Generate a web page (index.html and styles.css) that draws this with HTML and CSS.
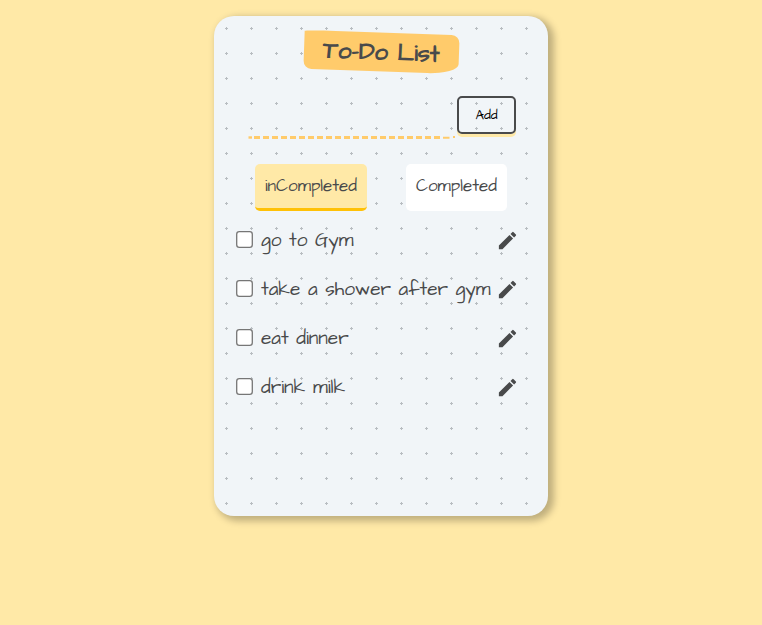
FILE: index.html
```html
<!DOCTYPE html>
<html lang="en">
<head>
<meta charset="utf-8">
<title>To-Do List</title>
<link rel="stylesheet" href="styles.css">
</head>
<body>
<main class="card">
  <h1 class="title"><span>To-Do List</span></h1>
  <form class="entry">
    <div class="field"><svg width="209" height="3" viewBox="0 0 209 3"><path d="M0.500 1.500H4" stroke="#ffcb6b" stroke-width="2.4"/><path d="M6 1.500H195" stroke="#ffcb6b" stroke-width="3" stroke-dasharray="6 3"/><path d="M195 1.800H201.500M205 1H207" stroke="#ffcb6b" stroke-width="2"/></svg></div>
    <button class="add" type="button">Add</button>
  </form>
  <nav class="tabs">
    <div class="tab active"><span>inCompleted</span></div>
    <div class="tab done"><span>Completed</span></div>
  </nav>
  <ul class="list">
    <li><input class="box" type="checkbox"><span class="text">go to Gym</span><svg class="pen" viewBox="0 0 24 24"><path d="M3 17.25V21h3.75L17.81 9.94l-3.75-3.75L3 17.25zM20.71 7.04c.39-.39.39-1.02 0-1.41l-2.34-2.34a.9959.9959 0 0 0-1.41 0l-1.83 1.83 3.75 3.75 1.83-1.83z"/></svg></li>
    <li><input class="box" type="checkbox"><span class="text">take a shower after gym</span><svg class="pen" viewBox="0 0 24 24"><path d="M3 17.25V21h3.75L17.81 9.94l-3.75-3.75L3 17.25zM20.71 7.04c.39-.39.39-1.02 0-1.41l-2.34-2.34a.9959.9959 0 0 0-1.41 0l-1.83 1.83 3.75 3.75 1.83-1.83z"/></svg></li>
    <li><input class="box" type="checkbox"><span class="text">eat dinner</span><svg class="pen" viewBox="0 0 24 24"><path d="M3 17.25V21h3.75L17.81 9.94l-3.75-3.75L3 17.25zM20.71 7.04c.39-.39.39-1.02 0-1.41l-2.34-2.34a.9959.9959 0 0 0-1.41 0l-1.83 1.83 3.75 3.75 1.83-1.83z"/></svg></li>
    <li><input class="box" type="checkbox"><span class="text">drink milk</span><svg class="pen" viewBox="0 0 24 24"><path d="M3 17.25V21h3.75L17.81 9.94l-3.75-3.75L3 17.25zM20.71 7.04c.39-.39.39-1.02 0-1.41l-2.34-2.34a.9959.9959 0 0 0-1.41 0l-1.83 1.83 3.75 3.75 1.83-1.83z"/></svg></li>
  </ul>
</main>
</body>
</html>
```
FILE: styles.css
```css
* { box-sizing: border-box; }
body {
  margin: 0;
  padding-top: 16px;
  min-height: 625px;
  background: #ffe9a7;
  color: #494a4b;
  font-family: "Architects Daughter", Lato, sans-serif;
  font-weight: 300;
}
.card {
  width: 334px;
  height: 500px;
  margin: 0 auto;
  padding-top: 16px;
  border-radius: 20px;
  background: radial-gradient(#b8bdc1 1.3px, transparent 1.3px) 0 0 / 25px 25px #f1f5f8;
  box-shadow: 4px 3px 7px 2px #00000040;
}
.title {
  width: 155px;
  height: 39px;
  margin: 0 0 0 90px;
  padding-left: 19px;
  background: #ffcb6b;
  border-radius: 31px 8px 31px 8px / 1px 8px 10px 8px;
  transform: translateY(0.5px) rotate(2deg);
  font-size: 24px;
  font-weight: 700;
  line-height: 40px;
  white-space: nowrap;
}
.entry {
  display: flex;
  align-items: flex-start;
  margin: 25px 0 0 34px;
}
.field { width: 209px; height: 43px; padding-top: 40px; }
.field svg { display: block; }
.add {
  width: 59px;
  height: 38px;
  padding: 0;
  border: 2px solid #494a4b;
  border-radius: 5px;
  background: transparent;
  box-shadow: 0 3px 0 #ffe9a7;
  color: #000;
  font: inherit;
  font-weight: 400;
  font-size: 13.333px;
}
.tabs { display: flex; gap: 39px; margin: 25px 0 0 41px; }
.tab {
  height: 47px;
  padding-left: 10px;
  border-radius: 5px;
  font-size: 17px;
  line-height: 45px;
  white-space: nowrap;
}
.active { width: 112px; background: #ffe9a7; border-bottom: 3px solid #ffc107; }
.done { width: 101px; background: #fff; }
.list { list-style: none; margin: 5px 0 0; padding: 0 30px 0 22px; }
.list li { display: flex; align-items: center; height: 49px; }
.box {
  width: 13px;
  height: 13px;
  flex: none;
  margin: 0 2px 2px;
  transform: scale(1.3);
}
.text { margin-left: 8px; font-size: 19px; line-height: 25px; white-space: nowrap; }
.pen { width: 23px; height: 23px; flex: none; margin: 0 -1px 0 auto; fill: #494a4b; }
```
